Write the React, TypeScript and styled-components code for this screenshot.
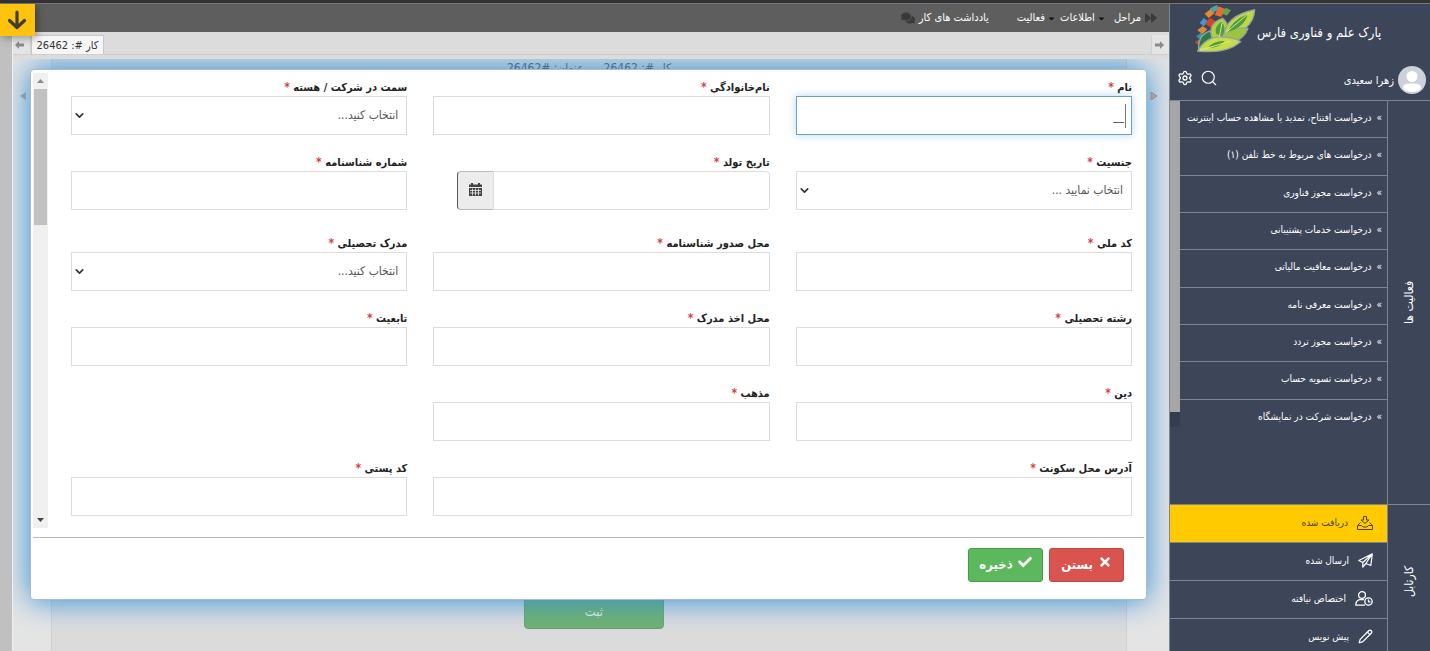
import React from "react";
import styled, { createGlobalStyle, css } from "styled-components";
import { FaCaretDown, FaCheck, FaComments, FaForward, FaTimes } from "react-icons/fa";
import { Search, Settings, Pencil, ChevronDown } from "lucide-react";

const fontStack = `"DejaVu Sans Condensed", "DejaVu Sans", sans-serif`;

const GlobalStyle = createGlobalStyle`
  *, *::before, *::after { box-sizing: border-box; }
  body { margin: 0; font-family: ${fontStack}; font-size: 11px; color: #333; overflow: hidden; }
  button, input, select { font-family: inherit; margin: 0; }
  ul { list-style: none; margin: 0; padding: 0; }
`;

const Page = styled.div`
  display: flex;
  flex-direction: column;
  height: 100vh;
  overflow: hidden;
  background: #dcdcdc;
`;

const TopStrip = styled.div`
  flex: none;
  height: 4px;
  background: #333335;
  border-bottom: 1px solid #77797c;
`;

const Columns = styled.div`
  display: flex;
  flex: 1;
  min-height: 0;
`;

/* ---------- Sidebar ---------- */

const line = "#7b8594";

const Sidebar = styled.aside`
  display: flex;
  flex-direction: column;
  flex: none;
  width: 261px;
  background: #3d4559;
  color: #fff;
  border-left: 1px solid ${line};
  overflow: hidden;
`;

const Brand = styled.a`
  display: flex;
  align-items: flex-start;
  flex: none;
  height: 56px;
  padding-left: 24px;
  direction: ltr;
  color: #fff;
  text-decoration: none;
`;

const BrandName = styled.span`
  direction: rtl;
  padding-top: 20px;
  font-size: 13px;
  line-height: 18px;
  white-space: nowrap;
`;

const UserBar = styled.div`
  display: flex;
  align-items: center;
  flex: none;
  height: 41px;
  padding: 0 4px 0 3px;
  border-bottom: 1px solid ${line};
`;

const UserName = styled.span`
  margin-right: 4px;
  margin-left: auto;
`;

const IconButton = styled.button`
  display: flex;
  align-items: center;
  justify-content: center;
  width: 24px;
  height: 24px;
  margin-bottom: 4px;
  padding: 0;
  border: 0;
  background: none;
  color: #fff;
`;

const Section = styled.section<{ $minHeight?: number }>`
  display: flex;
  flex: none;
  min-height: ${(p) => p.$minHeight ?? 0}px;
  border-bottom: 1px solid ${line};
`;

const SectionTitle = styled.h2`
  display: flex;
  align-items: center;
  justify-content: center;
  flex: none;
  width: 43px;
  margin: 0;
  border-right: 1px solid ${line};
  font-size: 12px;
  font-weight: 400;
  writing-mode: vertical-rl;
  transform: rotate(180deg);
`;

const ActivityList = styled.ul`
  display: grid;
  grid-auto-rows: 1fr;
  flex: 1;
  align-self: flex-start;
  min-height: 336px;
`;

const ActivityItem = styled.li`
  display: flex;
  border-bottom: 1px solid ${line};

  &:last-child {
    border-bottom: 0;
  }
`;

const ActivityLink = styled.a`
  display: flex;
  align-items: center;
  gap: 5px;
  flex: 1;
  padding: 0 5px 3px 0;
  color: #fff;
  font-size: 10px;
  text-decoration: none;
  white-space: nowrap;
`;

const SideTrack = styled.div`
  align-self: flex-start;
  width: 10px;
  height: 326px;
  background: #a6a6a6;
  border-bottom: 15px solid #353d50;
`;

const InboxList = styled.ul`
  flex: 1;
`;

const InboxLink = styled.a<{ $active?: boolean }>`
  display: flex;
  align-items: center;
  gap: 9px;
  height: 38px;
  padding: 0 14px 2px 0;
  border-bottom: 1px solid ${line};
  background: ${(p) => (p.$active ? "#ffcb00" : "transparent")};
  color: ${(p) => (p.$active ? "#4d4526" : "#fff")};
  font-size: 10px;
  text-decoration: none;
`;

/* ---------- Workspace ---------- */

const Main = styled.main`
  position: relative;
  display: flex;
  flex-direction: column;
  flex: 1;
  min-width: 0;
`;

const Toolbar = styled.nav`
  display: flex;
  align-items: center;
  flex: none;
  height: 28px;
  padding-right: 12px;
  background: #5e5e5e;
  color: #fff;
`;

const ToolButton = styled.button<{ $before?: number; $gap?: number }>`
  display: flex;
  align-items: center;
  gap: ${(p) => p.$gap ?? 4}px;
  margin-right: ${(p) => p.$before ?? 0}px;
  padding: 0;
  border: 0;
  background: none;
  color: #fff;
  font-size: 11px;
  line-height: 16px;

  svg {
    color: #3a3a3a;
  }
`;

const MenuCaret = styled(FaCaretDown)`
  && {
    color: #111;
  }
`;

const DownButton = styled.button`
  position: absolute;
  top: 0;
  left: 0;
  z-index: 5;
  display: flex;
  align-items: center;
  justify-content: center;
  width: 35px;
  height: 32px;
  padding: 0 2px 0 0;
  border: 0;
  background: #ffc20e;
  color: #3f3d36;
  box-shadow: 2px 2px 8px rgba(0, 0, 0, 0.35);
`;

const Body = styled.div`
  display: flex;
  flex: 1;
  min-height: 0;
`;

const Gutter = styled.div`
  flex: none;
  width: 13px;
  background: #c0c0c0;
  border-right: 1px solid #f0f0f0;
`;

const Workspace = styled.div`
  display: flex;
  flex-direction: column;
  flex: 1;
  min-width: 0;
`;

const TabBar = styled.div`
  display: flex;
  flex: none;
  height: 23px;
  margin-bottom: 4px;
  padding-top: 3px;
  border-bottom: 1px solid #cfcfcf;
  direction: ltr;
`;

const TabArrow = styled.button`
  display: flex;
  align-items: center;
  justify-content: center;
  width: 18px;
  padding: 0 4px 0 0;
  border: 0;
  border-right: 1px solid #d0d0d0;
  background: #e4e4e4;
  color: #8b8b8b;

  &:last-child {
    margin-left: auto;
    padding: 0 2px 0 0;
    border-right: 0;
    border-left: 1px solid #d0d0d0;
  }
`;

const Tab = styled.button`
  direction: rtl;
  width: 73px;
  padding: 0;
  border: 1px solid #c8c8c8;
  border-bottom: 0;
  background: #f6f6f6;
  color: #333;
  font-size: 11px;
`;

const Canvas = styled.div`
  position: relative;
  display: flex;
  flex: 1;
  min-height: 0;
  overflow: hidden;
  background: #e4e4e4;
`;

const Edge = styled.div<{ $width: number; $end?: boolean }>`
  display: flex;
  justify-content: ${(p) => (p.$end ? "flex-end" : "flex-start")};
  flex: none;
  width: ${(p) => p.$width}px;
  padding: ${(p) => (p.$end ? "32px 0 0 6px" : "32px 11px 0 0")};
`;

const EdgeHandle = styled.button`
  position: relative;
  z-index: 3;
  width: 8px;
  height: 10px;
  padding: 0;
  border: 0;
  background: none;

  svg {
    display: block;
  }
`;

const Panel = styled.div`
  display: flex;
  flex-direction: column;
  align-items: center;
  justify-content: space-between;
  flex: 1;
  padding-bottom: 22px;
  border: 1px solid #d0d0d0;
  border-width: 0 1px;
  background: #dcdbdc;
`;

const PanelTitle = styled.div`
  display: flex;
  gap: 20px;
  color: #555;
  font-size: 12px;
  line-height: 18px;
`;

const PanelActions = styled.div`
  padding-left: 10px;
`;

const SubmitButton = styled.button`
  width: 140px;
  height: 36px;
  padding: 0;
  border: 1px solid #69a46b;
  border-radius: 4px;
  background: #6fb171;
  color: #e3efe3;
  font-size: 13px;
`;

/* ---------- Dialog ---------- */

const Dialog = styled.div`
  position: absolute;
  top: 10px;
  right: 22px;
  left: 17px;
  z-index: 2;
  padding: 3px 2px 17px;
  border: 1px solid #a9bccb;
  border-radius: 4px;
  background: #fff;
  box-shadow: 0 0 30px #2c8fdc;
`;

const DialogBody = styled.div`
  display: flex;
`;

const Form = styled.form`
  display: grid;
  grid-template-columns: repeat(3, 1fr);
  column-gap: 26px;
  row-gap: 18px;
  flex: 1;
  min-width: 0;
  padding: 5px 12px 12px 23px;
`;

const ScrollTrack = styled.div`
  display: flex;
  flex-direction: column;
  align-items: center;
  width: 15px;
  background: #f0f0f0;
`;

const ScrollArrow = styled.svg`
  flex: none;
  width: 15px;
  height: 16px;
`;

const ScrollThumb = styled.div`
  width: 13px;
  height: 136px;
  margin-bottom: auto;
  background: #c1c1c1;
`;

const Field = styled.div<{ $wide?: boolean }>`
  min-width: 0;
  ${(p) => p.$wide && css`grid-column: 1 / span 2;`}
`;

const Label = styled.label`
  display: block;
  height: 18px;
  color: #222;
  font-size: 11px;
  font-weight: 700;
  line-height: 18px;
`;

const Star = styled.span`
  color: #d9413f;
  font-size: 12px;
`;

const Control = styled.div`
  position: relative;
`;

const controlLook = css`
  display: block;
  width: 100%;
  height: 39px;
  padding: 0 7px;
  border: 1px solid #dcdcdc;
  border-radius: 0;
  outline: 0;
  background: #fff;
  color: #555;
  font-size: 12px;
`;

const TextInput = styled.input<{ $focused?: boolean }>`
  ${controlLook}
  ${(p) =>
    p.$focused &&
    css`
      border-color: #6c9fca;
      box-shadow: 0 0 8px rgba(102, 175, 233, 0.5);
    `}
`;

const Select = styled.select`
  ${controlLook}
  appearance: none;
  padding: 0 8px 2px;
`;

const SelectChevron = styled(ChevronDown)`
  position: absolute;
  top: 13px;
  left: 2px;
  color: #333;
  pointer-events: none;
`;

const Caret = styled.span`
  position: absolute;
  top: 8px;
  right: 6px;
  width: 1px;
  height: 24px;
  background: #777;
`;

const DateGroup = styled.div`
  display: flex;
  margin: 0 0 6px 24px;
`;

const DateInput = styled(TextInput)`
  flex: 1;
  min-width: 0;
  border-radius: 0 4px 4px 0;
`;

const DateButton = styled.button`
  display: flex;
  align-items: center;
  justify-content: center;
  width: 36px;
  height: 39px;
  padding: 0 0 3px;
  border: 1px solid #bbb;
  border-left-color: #555;
  border-right: 0;
  border-radius: 4px 0 0 4px;
  background: #ececec;
`;

const DialogFooter = styled.footer`
  display: flex;
  gap: 6px;
  margin-top: 9px;
  padding: 10px 20px 0 0;
  border-top: 1px solid #b9b9b9;
`;

const ActionButton = styled.button<{ $color: string; $edge: string }>`
  display: flex;
  align-items: center;
  justify-content: center;
  gap: 5px;
  width: 75px;
  height: 34px;
  padding: 0 0 2px;
  border: 1px solid ${(p) => p.$edge};
  border-radius: 3px;
  background: ${(p) => p.$color};
  color: #fff;
  font-size: 13px;
  font-weight: 700;

  svg {
    margin-bottom: 4px;
  }
`;

/* ---------- Drawings ---------- */

const LogoMark = () => (
  <svg width="63" height="49" viewBox="86 11 189 147" aria-hidden="true">
    <path d="M118 40l18-14 12 12-18 15z" fill="#e88a2c" />
    <path d="M134 24l20-10 8 12-20 12z" fill="#4fa6a0" />
    <path d="M148 44l12-26 20 8-12 24z" fill="#ef6a30" />
    <path d="M168 38l14-16 15 8-13 16z" fill="#62a744" />
    <path d="M103 68l12-15 12 9-11 16z" fill="#3c9bd4" />
    <path d="M118 70l16-18 16 10-12 20z" fill="#d8432f" />
    <path d="M96 90l16-13 14 10-15 15z" fill="#e0893a" />
    <path d="M92 108l14-10 12 9-12 12z" fill="#2d9aa8" />
    <path d="M89 126l12-9 12 8-11 11z" fill="#c9552e" />
    <g stroke="#94a3a8" strokeWidth="4" strokeLinejoin="round">
      <path d="M100 150C98 118 108 100 134 92C156 112 144 140 100 150z" fill="#2f7a4a" />
      <path d="M140 112C130 84 142 64 172 54C192 72 194 96 172 116z" fill="#b5cf3c" />
      <path d="M176 104C180 66 212 40 268 28C266 70 230 106 176 104z" fill="#c0d840" />
      <path d="M160 112C190 86 222 80 248 84C236 118 200 134 160 130z" fill="#9cc53c" />
      <path d="M97 152C116 120 142 108 172 110C208 112 218 118 226 124C196 150 150 158 97 152z" fill="#c8dc48" />
    </g>
    <path d="M152 100q-6-22 16-36q18 18 2 44z" fill="#4d9c41" />
    <path d="M188 94q10-32 60-54q-10 40-60 54z" fill="#4d9c41" />
    <path d="M128 142q18-22 50-20q-16 22-50 20z" fill="#4d9c41" />
    <path d="M180 98l72-60M162 110l8-42M104 150l92-28" stroke="#dbe98a" strokeWidth="3" fill="none" />
  </svg>
);

const Avatar = () => (
  <svg width="28" height="28" viewBox="0 0 28 28" aria-hidden="true">
    <circle cx="14" cy="14" r="14" fill="#ccd2dc" />
    <circle cx="14" cy="10.500" r="5.500" fill="#fff" />
    <path d="M5 22c0-4 4-4.500 9-4.500s9 0.500 9 4.500c-2 3-5 4-9 4s-7-1-9-4z" fill="#fff" />
  </svg>
);

const HeavyDownArrow = () => (
  <svg width="20" height="20" viewBox="0 0 20 20" fill="none" stroke="currentColor" strokeWidth="3.200" strokeLinecap="round" strokeLinejoin="round" aria-hidden="true">
    <path d="M10 2v15M2.500 10.500L10 17.500l7.500-7" />
  </svg>
);

const SolidArrow = ({ flip }: { flip?: boolean }) => (
  <svg width="9" height="8" viewBox="0 0 9 8" aria-hidden="true">
    <path d={flip ? "M9 4L5 0v2.500H0v3h5V8z" : "M0 4l4-4v2.500h5v3H4V8z"} fill="currentColor" />
  </svg>
);

const ReceivedIcon = () => (
  <svg width="16" height="14" viewBox="0 0 16 14" fill="none" stroke="currentColor" strokeLinejoin="round" aria-hidden="true">
    <path d="M6.500 0.500h3v3.500h2.500L8 7.500 4 4h2.500z" />
    <path d="M3.500 6.500L0.500 9.500v4h15v-4L12.500 6.500M0.500 9.500h4l1.500 1.500h4l1.500-1.500h4" />
  </svg>
);

const SentIcon = () => (
  <svg width="15" height="15" viewBox="0 0 15 15" fill="none" stroke="currentColor" strokeWidth="1.200" strokeLinejoin="round" aria-hidden="true">
    <path d="M14.300 0.800L0.800 7.500l4 2L14.300 0.800l-1.500 11.700-5-2L14.300 0.800M4.800 9.500v4.700l3-3.700" />
  </svg>
);

const UnassignedIcon = () => (
  <svg width="18" height="15" viewBox="0 0 18 15" fill="none" stroke="currentColor" strokeWidth="1.300" strokeLinejoin="round" aria-hidden="true">
    <circle cx="7" cy="4" r="3.400" />
    <path d="M10 14.200H0.800c0-3.200 1.200-5 4-5.600h4" />
    <circle cx="13.500" cy="10.500" r="3.700" />
    <path d="M13.500 8.500v2.300h2" />
  </svg>
);

const CalendarIcon = () => (
  <svg width="13" height="13" viewBox="0 0 13 13" aria-hidden="true">
    <path d="M0 4V1.500h2V0h2v1.500h5V0h2v1.500h2V4z" fill="#444" />
    <path d="M0 5h13v8H0z" fill="#444" />
    <path d="M1 7.500h11M1 10h11M3.500 5.500v7M6.500 5.500v7M9.500 5.500v7" stroke="#ececec" strokeWidth="0.800" />
  </svg>
);

/* ---------- Data ---------- */

const activities = [
  "درخواست افتتاح، تمدید یا مشاهده حساب اینترنت",
  "درخواست های مربوط به خط تلفن (۱)",
  "درخواست مجوز فناوری",
  "درخواست خدمات پشتیبانی",
  "درخواست معافیت مالیاتی",
  "درخواست معرفی نامه",
  "درخواست مجوز تردد",
  "درخواست تسویه حساب",
  "درخواست شرکت در نمایشگاه",
];

const inbox = [
  { label: "دریافت شده", icon: <ReceivedIcon />, active: true },
  { label: "ارسال شده", icon: <SentIcon /> },
  { label: "اختصاص نیافته", icon: <UnassignedIcon /> },
  { label: "پیش نویس", icon: <Pencil size={15} strokeWidth={2} /> },
];

type FieldSpec = {
  id: string;
  label: string;
  kind?: "select" | "date" | "focused";
  placeholder?: string;
  wide?: boolean;
};

const fields: FieldSpec[] = [
  { id: "first", label: "نام", kind: "focused" },
  { id: "last", label: "نام‌خانوادگی" },
  { id: "role", label: "سمت در شرکت / هسته", kind: "select", placeholder: "انتخاب کنید..." },
  { id: "gender", label: "جنسیت", kind: "select", placeholder: "انتخاب نمایید ..." },
  { id: "birth", label: "تاریخ تولد", kind: "date" },
  { id: "cert", label: "شماره شناسنامه" },
  { id: "national", label: "کد ملی" },
  { id: "issued", label: "محل صدور شناسنامه" },
  { id: "degree", label: "مدرک تحصیلی", kind: "select", placeholder: "انتخاب کنید..." },
  { id: "major", label: "رشته تحصیلی" },
  { id: "school", label: "محل اخذ مدرک" },
  { id: "citizen", label: "تابعیت" },
  { id: "religion", label: "دین" },
  { id: "faith", label: "مذهب" },
  { id: "address", label: "آدرس محل سکونت", wide: true },
  { id: "postal", label: "کد پستی" },
];

const FieldControl = ({ field }: { field: FieldSpec }) => {
  switch (field.kind) {
    case "select":
      return (
        <Control>
          <Select id={field.id}>
            <option>{field.placeholder}</option>
          </Select>
          <SelectChevron size={13} strokeWidth={3} />
        </Control>
      );
    case "date":
      return (
        <DateGroup>
          <DateInput id={field.id} type="text" />
          <DateButton type="button" aria-label="تقویم">
            <CalendarIcon />
          </DateButton>
        </DateGroup>
      );
    case "focused":
      return (
        <Control>
          <TextInput id={field.id} type="text" defaultValue="__" $focused />
          <Caret />
        </Control>
      );
    default:
      return <TextInput id={field.id} type="text" />;
  }
};

export default function App() {
  return (
    <Page dir="rtl" lang="fa">
      <GlobalStyle />
      <TopStrip />
      <Columns>
        <Sidebar>
          <Brand href="#">
            <LogoMark />
            <BrandName>پارک علم و فناوری فارس</BrandName>
          </Brand>
          <UserBar>
            <Avatar />
            <UserName>زهرا سعیدی</UserName>
            <IconButton aria-label="جستجو">
              <Search size={18} strokeWidth={1.5} />
            </IconButton>
            <IconButton aria-label="تنظیمات">
              <Settings size={16} strokeWidth={2} />
            </IconButton>
          </UserBar>
          <Section $minHeight={404}>
            <SectionTitle>فعالیت ها</SectionTitle>
            <ActivityList>
              {activities.map((name) => (
                <ActivityItem key={name}>
                  <ActivityLink href="#">
                    <span>»</span>
                    {name}
                  </ActivityLink>
                </ActivityItem>
              ))}
            </ActivityList>
            <SideTrack />
          </Section>
          <Section>
            <SectionTitle>کارتابل</SectionTitle>
            <InboxList>
              {inbox.map((item) => (
                <li key={item.label}>
                  <InboxLink href="#" $active={item.active}>
                    {item.icon}
                    {item.label}
                  </InboxLink>
                </li>
              ))}
            </InboxList>
          </Section>
        </Sidebar>

        <Main>
          <Toolbar>
            <ToolButton>
              <FaForward size={12} />
              مراحل
            </ToolButton>
            <ToolButton $before={8} $gap={2}>
              <MenuCaret size={9} />
              اطلاعات
            </ToolButton>
            <ToolButton $before={4} $gap={2}>
              <MenuCaret size={9} />
              فعالیت
            </ToolButton>
            <ToolButton $before={28}>
              یادداشت های کار
              <FaComments size={14} />
            </ToolButton>
          </Toolbar>
          <DownButton aria-label="پایین">
            <HeavyDownArrow />
          </DownButton>
          <Body>
            <Workspace>
              <TabBar>
                <TabArrow aria-label="قبلی">
                  <SolidArrow />
                </TabArrow>
                <Tab>کار #: 26462</Tab>
                <TabArrow aria-label="بعدی">
                  <SolidArrow flip />
                </TabArrow>
              </TabBar>
              <Canvas>
                <Edge $width={42}>
                  <EdgeHandle aria-label="باز کردن">
                    <svg width="8" height="10" viewBox="0 0 8 10">
                      <path d="M1 1l6 4-6 4z" fill="#b79aa6" stroke="#8f8a96" />
                    </svg>
                  </EdgeHandle>
                </Edge>
                <Panel>
                  <PanelTitle>
                    <span>کار #: 26462</span>
                    <span>عنوان: #26462</span>
                  </PanelTitle>
                  <PanelActions>
                    <SubmitButton>ثبت</SubmitButton>
                  </PanelActions>
                </Panel>
                <Edge $width={38} $end>
                  <EdgeHandle aria-label="بستن نوار">
                    <svg width="8" height="10" viewBox="0 0 8 10">
                      <path d="M7 1L1 5l6 4z" fill="#8d99a8" />
                    </svg>
                  </EdgeHandle>
                </Edge>

                <Dialog role="dialog">
                  <DialogBody>
                    <Form>
                      {fields.map((field) => (
                        <Field key={field.id} $wide={field.wide}>
                          <Label htmlFor={field.id}>
                            {field.label} <Star>*</Star>
                          </Label>
                          <FieldControl field={field} />
                        </Field>
                      ))}
                    </Form>
                    <ScrollTrack>
                      <ScrollArrow viewBox="0 0 15 16">
                        <path d="M4 10l3.500-4L11 10z" fill="#8b8b8b" />
                      </ScrollArrow>
                      <ScrollThumb />
                      <ScrollArrow viewBox="0 0 15 16">
                        <path d="M4 6h7l-3.500 4z" fill="#444" />
                      </ScrollArrow>
                    </ScrollTrack>
                  </DialogBody>
                  <DialogFooter>
                    <ActionButton type="button" $color="#d9534f" $edge="#b94a46">
                      <FaTimes size={14} />
                      بستن
                    </ActionButton>
                    <ActionButton type="button" $color="#5cb85c" $edge="#4b9a4b">
                      <FaCheck size={14} />
                      ذخیره
                    </ActionButton>
                  </DialogFooter>
                </Dialog>
              </Canvas>
            </Workspace>
            <Gutter />
          </Body>
        </Main>
      </Columns>
    </Page>
  );
}
